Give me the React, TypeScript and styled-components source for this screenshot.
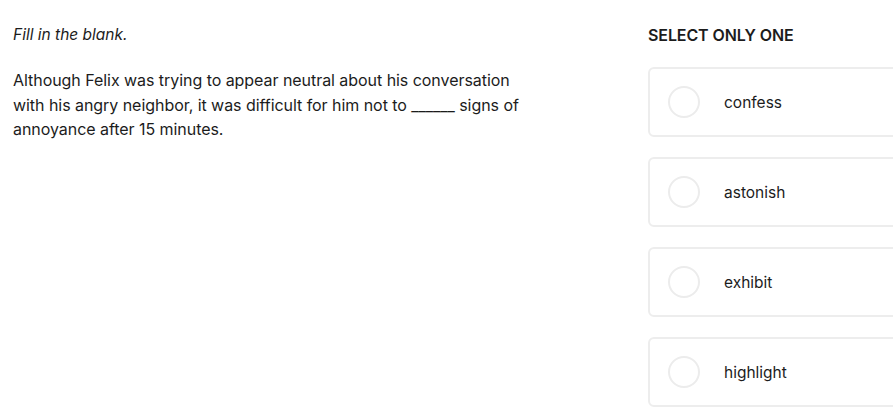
import React from "react";
import styled, { createGlobalStyle } from "styled-components";

const Global = createGlobalStyle`
  html, body { margin: 0; padding: 0; background: #ffffff; overflow: hidden; }
  body { font-family: Inter, "Liberation Sans", Arial, sans-serif; color: #1c1c1c; }
`;

const Page = styled.div`
  display: flex;
  align-items: flex-start;
  padding: 24px 0 0 13px;
  width: 1200px;
`;

const Prompt = styled.section`
  width: 525px;
  margin-right: 110px;
`;

const Instruction = styled.p`
  margin: 0 0 22px;
  font-style: italic;
  font-size: 15.5px;
  line-height: 22px;
`;

const Question = styled.p`
  margin: 0;
  font-size: 16px;
  line-height: 24.5px;
  letter-spacing: -0.05px;
`;

const Answers = styled.section`
  display: flex;
  flex-direction: column;
  width: 320px;
`;

const Heading = styled.h2`
  margin: 0 0 21px;
  font-size: 16px;
  line-height: 22px;
  font-weight: 600;
  letter-spacing: -0.1px;
`;

const OptionList = styled.div`
  display: flex;
  flex-direction: column;
  gap: 20px;
`;

const Option = styled.label`
  display: flex;
  align-items: center;
  height: 70px;
  box-sizing: border-box;
  border: 2px solid #ededed;
  border-radius: 6px;
  padding-left: 18px;
  cursor: pointer;
`;

const Radio = styled.span`
  width: 32px;
  height: 32px;
  box-sizing: border-box;
  border: 2px solid #ececec;
  border-radius: 50%;
  margin-right: 24px;
  flex-shrink: 0;
`;

const OptionText = styled.span`
  font-size: 15.5px;
  color: #1c1c1c;
`;

const options = ["confess", "astonish", "exhibit", "highlight"];

export default function App() {
  return (
    <>
      <Global />
      <Page>
        <Prompt>
          <Instruction>Fill in the blank.</Instruction>
          <Question>
            Although Felix was trying to appear neutral about his conversation with his angry
            neighbor, it was difficult for him not to ______ signs of annoyance after 15 minutes.
          </Question>
        </Prompt>
        <Answers>
          <Heading>SELECT ONLY ONE</Heading>
          <OptionList>
            {options.map((o) => (
              <Option key={o}>
                <Radio />
                <OptionText>{o}</OptionText>
              </Option>
            ))}
          </OptionList>
        </Answers>
      </Page>
    </>
  );
}
